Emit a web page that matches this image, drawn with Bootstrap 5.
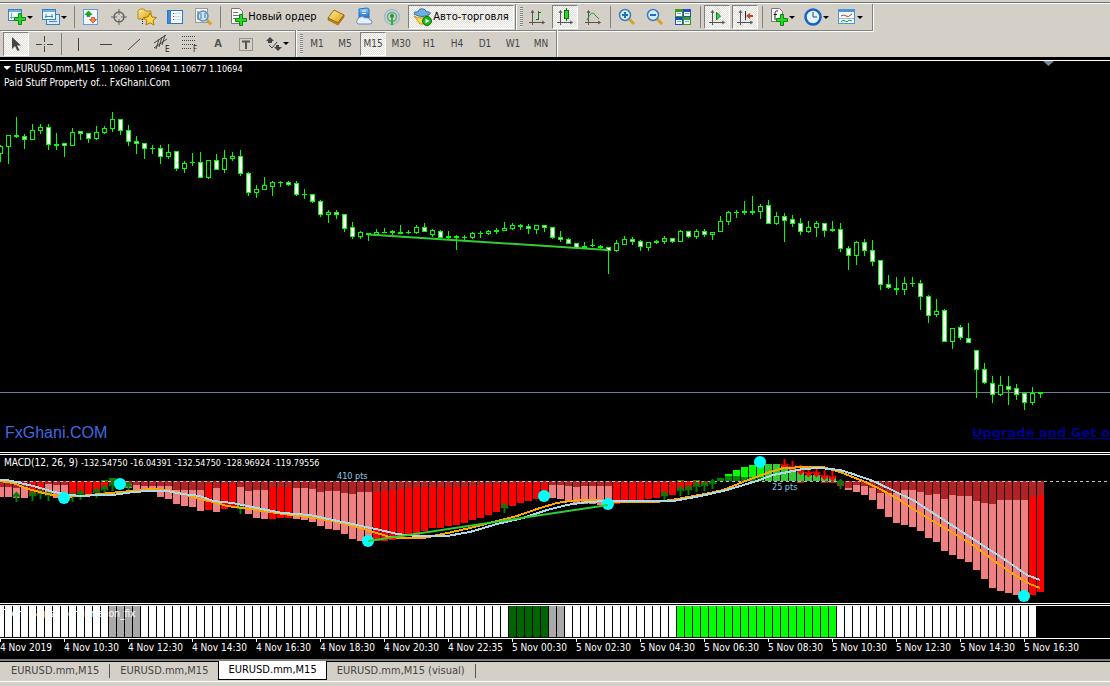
<!DOCTYPE html>
<html lang="ru">
<head>
<meta charset="utf-8">
<meta name="viewport" content="width=device-width, initial-scale=1">
<title>EURUSD.mm,M15</title>
<link href="https://cdn.jsdelivr.net/npm/bootstrap@5.3.0/dist/css/bootstrap.min.css" rel="stylesheet">
<style>
:root{--face:#d4d0c8;--shade:#808080;--ui:"DejaVu Sans Condensed","DejaVu Sans",sans-serif}
body{font-family:var(--ui);font-size:11px;line-height:14px;background:var(--face);color:#000;overflow-x:hidden}
button{font:inherit;color:inherit;background:none;border:0;padding:0}
.toolrow{height:27px;background:var(--face)}
.tools-top{border-top:1px solid #fff}
.bar{height:27px;padding:0 1px 0 3px;border-right:1px solid var(--shade);border-bottom:1px solid var(--shade);box-shadow:1px 1px 0 #fff}
.tools-low .bar{border-bottom:0;box-shadow:1px 0 0 #fff}
.tool{width:28px;height:24px;flex:none}
.tool svg,.wide svg{flex:none}
.tool.drop{width:34px}
.tool,.wide{display:flex;align-items:center;justify-content:center;white-space:nowrap}
.drop::after{content:"";border:3px solid transparent;border-top-color:#000;border-bottom:0}
.on{border:1px solid;border-color:var(--shade) #fff #fff var(--shade);background:repeating-conic-gradient(#fff 0 25%,#e0ddd6 0 50%) 0 0/2px 2px}
.tool.on{width:26px;margin:0 1px}
.order{width:99px}
.auto{width:106px;height:24px;margin-left:2px}
.sep{width:6px;height:22px;flex:none;background:linear-gradient(90deg,transparent 3px,#808080 3px 4px,transparent 4px)}
.grip{width:3px;height:20px;margin-left:1px;flex:none;background:repeating-linear-gradient(#808080 0 1px,#e8e6e0 1px 2px)}
.tf{font-size:10px;color:#444}
.pane{position:relative;overflow:hidden;background:#000;color:#fff;border-top:1px solid #fff}
.pane>svg{position:absolute;inset:0;width:100%;height:100%}
.pane-text{position:relative;font-size:10px;line-height:13px;white-space:pre;padding:1px 4px 0}
.quote{font-size:9px}
.price{flex:1 0 300px;border-bottom:1px solid #fff}
.macd{height:150px;margin-top:1px;border-bottom:1px solid #fff}
.strip{height:34px;margin-top:1px;border-bottom:1px solid #fff}
.brand{font-family:"Liberation Sans",Arial,sans-serif;font-size:16px;line-height:20px;color:#4169e1}
.promo{font:bold 13px/20px "DejaVu Sans",sans-serif;color:#00008b;text-decoration:underline;white-space:nowrap;flex:none}
.footline{padding:0 0 9px 5px}
.axis{height:22px;background:#000;color:#fff;font-size:10px;line-height:16px;overflow:hidden;border-bottom:2px solid var(--shade)}
.stamp{width:64px;flex:none;white-space:nowrap;background:linear-gradient(#fff,#fff) 0 0/1px 3px no-repeat;padding-top:1px}
.tabs{border-top:1px solid #000;border-bottom:1px solid #fff;height:21px;padding-left:1px}
.tabs a{display:block;height:19px;line-height:17px;padding:0 10px;color:#444;text-decoration:none;font-size:11px}
.tabs .vis{border-right:1px solid #555;height:14px;margin-top:2px;line-height:14px}
.tabs .current{background:#fff;color:#000;border:1px solid #000;border-top:0;padding:0 9px;margin-top:-1px}
svg text{font-family:var(--ui)}
</style>
<script src="https://cdn.jsdelivr.net/npm/bootstrap@5.3.0/dist/js/bootstrap.bundle.min.js"></script>
</head>
<body class="d-flex flex-column min-vh-100">
<svg width="0" height="0" class="position-absolute" aria-hidden="true">
  <defs>
    <symbol id="axes" viewBox="0 0 18 18"><path d="M4.5 3v14M1 14.5h15M3 5l1.500-2.500L6 5M14 13l2.500 1.500L14 16" fill="none" stroke="#555"/></symbol>
    <symbol id="plus" viewBox="0 0 12 12"><path d="M4.500 .5h3v4h4v3h-4v4h-3v-4h-4v-3h4z" fill="#2ed52e" stroke="#078a07"/></symbol>
    <linearGradient id="blue" x2="0" y2="1"><stop stop-color="#8fd0ff"/><stop offset="1" stop-color="#1668c8"/></linearGradient>
    <linearGradient id="gold" x2="1" y2="1"><stop stop-color="#fff3a0"/><stop offset="1" stop-color="#d99a10"/></linearGradient>
  </defs>
</svg>
<header>
  <div style="height:3px" class="border-bottom border-secondary"></div>
  <div class="toolrow tools-top d-flex">
    <div class="bar d-flex align-items-center">
      <button class="tool drop" aria-label="Новый график"><svg width="20" height="20"><rect x="1.500" y="2.500" width="13" height="11" fill="#eef7ff" stroke="#3a7fc0"/><path d="M2 4h12" stroke="#6fb0e8" stroke-width="2"/><path d="M4.500 6v6M3 10.500h9" stroke="#7aa2c4"/><use href="#plus" x="7" y="6" width="12" height="12"/></svg></button>
      <button class="tool drop" aria-label="Профили"><svg width="20" height="20"><rect x="5.500" y="7.500" width="13" height="10" fill="#d8ecfc" stroke="#3a7fc0"/><rect x="1.500" y="2.500" width="13" height="10" fill="#eef7ff" stroke="#3a7fc0"/><path d="M2 4h12" stroke="#6fb0e8" stroke-width="2"/><path d="M4 9.500h8M5 7v4M11 7v4M8 14.500h8" stroke="#4b86b8"/></svg></button>
      <span class="sep"></span>
      <button class="tool" aria-label="Обзор рынка"><svg width="18" height="18"><rect x="1.500" y="1.500" width="14" height="15" fill="#f2f8ff" stroke="#5aa0dc"/><path d="M6.500 3L10 6.500H8v2H5v-2H3z" fill="#12b312" stroke="#0a800a" stroke-width=".6"/><path d="M11 15l-3.500-3.500h2v-2h3v2h2z" fill="#ff8a50" stroke="#d04010" stroke-width=".8"/></svg></button>
      <button class="tool" aria-label="Окно данных"><svg width="18" height="18" fill="none" stroke="#666"><circle cx="9" cy="9" r="5" stroke-width="1.500"/><path d="M9 1v6M9 11v6M1 9h6M11 9h6"/></svg></button>
      <button class="tool" aria-label="Навигатор"><svg width="20" height="20"><path d="M1 4l2-2h4l1 2h6v8H1z" fill="url(#gold)" stroke="#b88a18"/><path d="M5.500 12v5" stroke="#222" stroke-dasharray="1 1"/><path d="M13 6l2 4 4.500.5-3.500 3 1 4.500-4-2.200L9 18l1-4.500-3.500-3L11 10z" fill="#ffd84a" stroke="#a87808"/></svg></button>
      <button class="tool" aria-label="Терминал"><svg width="18" height="18"><rect x="1.500" y="2.500" width="15" height="13" fill="#f4f9ff" stroke="#2c78c8"/><rect x="2" y="3" width="3" height="12" fill="#3e86d8"/><path d="M8 5.500h7M8 8.500h7M8 11.500h7" stroke="#cde"/><path d="M7 5.500h1M7 8.500h1M7 11.500h1" stroke="#d22"/></svg></button>
      <button class="tool" aria-label="Тестер стратегий"><svg width="20" height="20"><rect x="2.500" y="1.500" width="12" height="14" fill="#f4f4f4" stroke="#999"/><path d="M5 4v9M12 4v3" stroke="#467"/><circle cx="10" cy="9" r="5" fill="#c4e0f8" fill-opacity=".85" stroke="#5a8fc0" stroke-width="1.500"/><path d="M8 6v6M12 6v5" stroke="#579"/><path d="M14 13l4 4.500" stroke="#d9a020" stroke-width="3"/></svg></button>
      <span class="sep"></span>
      <button class="wide order"><svg width="20" height="20"><path d="M3.500 1.500h8l3 3v12h-11z" fill="#fafafa" stroke="#777"/><path d="M5 5.500h5M5 8.500h7M5 11.500h4" stroke="#777"/><use href="#plus" x="7" y="7" width="12" height="12"/></svg>Новый ордер</button>
      <button class="tool" aria-label="MetaEditor"><svg width="20" height="20"><path d="M2 11l6-8 10 5-6 8z" fill="url(#gold)" stroke="#9a6808"/><path d="M2 11v2l10 5 6-8V8l-6 8z" fill="#c88a14" stroke="#8a5a04" stroke-width=".6"/></svg></button>
      <button class="tool" aria-label="Маркет"><svg width="20" height="20"><path d="M5 2l8-1 2 1v9H5z" fill="url(#blue)" stroke="#1f70c4"/><path d="M8 4h4M8 6.500h4" stroke="#fff"/><path d="M4 17a3 3 0 0 1 0-5 4 3.500 0 0 1 7-1 3.500 3 0 0 1 5 2 2 2 0 0 1 0 4z" fill="#e6eef8" stroke="#6a8cb4"/></svg></button>
      <button class="tool" aria-label="Сигналы"><svg width="18" height="18" fill="none"><circle cx="9" cy="9" r="7.500" stroke="#9cbccc" stroke-width="1.500"/><circle cx="9" cy="9" r="4.500" stroke="#62a884" stroke-width="1.500"/><circle cx="9" cy="8" r="2" fill="#169a30"/><path d="M9 9v8" stroke="#2bb040" stroke-width="2"/></svg></button>
      <button class="wide on auto"><svg width="20" height="20"><path d="M1 9q7 5 15-2l-3 8q-3 3-6 2z" fill="#ffdc50" stroke="#c89414"/><path d="M1 7q0-3 4-2 1-4 5-3 3 0 3 3 5-1 4 2-8 5-16 0z" fill="#6fb2e0" stroke="#2f74a8"/><circle cx="14" cy="14" r="4.500" fill="#18b418" stroke="#087808"/><path d="M12.500 11.500l4 2.500-4 2.500z" fill="#fff"/></svg>Авто-торговля</button>
    </div>
    <div class="bar d-flex align-items-center">
      <span class="grip"></span>
      <button class="tool" aria-label="Бары"><svg width="18" height="18"><use href="#axes" width="18" height="18"/><path d="M10.500 3v9M8 11.500h2.500M10.500 4.500H13" stroke="#157a15"/></svg></button>
      <button class="tool on" aria-label="Свечи"><svg width="18" height="18"><use href="#axes" width="18" height="18"/><path d="M10.500 0v13" stroke="#157a15"/><rect x="8.500" y="2.500" width="4" height="8" fill="#30d030" stroke="#067a06"/></svg></button>
      <button class="tool" aria-label="Линия"><svg width="18" height="18"><use href="#axes" width="18" height="18"/><path d="M3 12q5-11 8-5l4 4" fill="none" stroke="#2a9a2a"/></svg></button>
      <span class="sep"></span>
      <button class="tool" aria-label="Увеличить"><svg width="18" height="18"><path d="M11 11l5 5" stroke="#d9a020" stroke-width="3"/><circle cx="7" cy="7" r="5.500" fill="#d4ecff" stroke="#3a80c0" stroke-width="1.500"/><path d="M4 7h6M7 4v6" stroke="#2070b8" stroke-width="2"/></svg></button>
      <button class="tool" aria-label="Уменьшить"><svg width="18" height="18"><path d="M11 11l5 5" stroke="#d9a020" stroke-width="3"/><circle cx="7" cy="7" r="5.500" fill="#d4ecff" stroke="#3a80c0" stroke-width="1.500"/><path d="M4 7h6" stroke="#2070b8" stroke-width="2"/></svg></button>
      <button class="tool" aria-label="Плитка"><svg width="18" height="18"><path d="M1 1h8v8H1zM9 9h8v8H9z" fill="#3c9a1c"/><path d="M9 1h8v8H9zM1 9h8v8H1z" fill="#1c50c8"/><path d="M2 4h6v4H2zM10 4h6v4h-6zM2 12h6v4H2zM10 12h6v4h-6z" fill="#f4f8f4"/><path d="M3 5.500h4M11 5.500h4M3 13.500h4M11 13.500h4" stroke="#7ac"/></svg></button>
      <span class="sep"></span>
      <button class="tool on" aria-label="Автопрокрутка"><svg width="18" height="18"><use href="#axes" width="18" height="18"/><path d="M8.500 4.500l4 3.500-4 4z" fill="#40d050" stroke="#108020"/></svg></button>
      <button class="tool on" aria-label="Сдвиг графика"><svg width="18" height="18"><use href="#axes" width="18" height="18"/><path d="M9.500 3v9" stroke="#226"/><path d="M10 8l4-3v2h3v2h-3v2z" fill="#d04010"/></svg></button>
      <span class="sep"></span>
      <button class="tool drop" aria-label="Индикаторы"><svg width="20" height="20"><path d="M2.500 1.500h8l3 3v10h-11z" fill="#fafafa" stroke="#777"/><path d="M9 4q-3-1-3 3v6M4.500 7.500H8" fill="none" stroke="#222"/><use href="#plus" x="7" y="7" width="12" height="12"/></svg></button>
      <button class="tool drop" aria-label="Периоды"><svg width="20" height="20"><circle cx="10" cy="10" r="7.500" fill="#e8f4ff" stroke="#1464c4" stroke-width="2.500"/><path d="M10 5v5h4" fill="none" stroke="#345"/></svg></button>
      <button class="tool drop" aria-label="Шаблоны"><svg width="20" height="20"><rect x="1.500" y="2.500" width="16" height="14" fill="#f6faff" stroke="#4a94d8"/><path d="M2 4h15" stroke="#4a94d8" stroke-width="2"/><path d="M4 9q3-2 5 0t6-2" fill="none" stroke="#b04020"/><path d="M2 11.500h15" stroke="#9bd"/><path d="M4 15q2-3 4-1t4-1l3 1" fill="none" stroke="#2a9a2a"/></svg></button>
      <span class="pe-1"></span>
    </div>
  </div>
  <div class="toolrow tools-low d-flex">
    <div class="bar d-flex align-items-center">
      <button class="tool on ms-0" aria-label="Курсор"><svg width="18" height="18"><path d="M5 2v12l3-3 2.500 5 2-1L10 10.500h4z" fill="#444"/></svg></button>
      <button class="tool" aria-label="Перекрестие"><svg width="18" height="18"><path d="M9.500 1v6M9.500 11v6M1 9.500h6M12 9.500h6M9 9.500h1" stroke="#444"/></svg></button>
      <span class="sep"></span>
      <button class="tool" aria-label="Вертикальная линия"><svg width="18" height="18"><path d="M9.500 3v13" stroke="#444"/></svg></button>
      <button class="tool" aria-label="Горизонтальная линия"><svg width="18" height="18"><path d="M3 9.500h12" stroke="#444"/></svg></button>
      <button class="tool" aria-label="Трендовая линия"><svg width="18" height="18"><path d="M3 15L15 4" stroke="#444"/></svg></button>
      <button class="tool" aria-label="Канал"><svg width="20" height="20" stroke="#444"><path d="M2 9L14 1M2 14L15 5M4 15l3-10M7 13l3-10M10 11l3-10" fill="none"/><text x="13" y="18" font-size="8" stroke="none" fill="#222">E</text></svg></button>
      <button class="tool" aria-label="Фибоначчи"><svg width="20" height="20"><path d="M2 2.500h14M2 6.500h14M2 10.500h14M2 14.500h9" stroke="#444" stroke-dasharray="1 1"/><text x="13" y="18" font-size="8" fill="#222">F</text></svg></button>
      <button class="tool fw-bold" style="color:#555">A</button>
      <button class="tool" aria-label="Метка"><svg width="18" height="18"><rect x="2.500" y="3.500" width="13" height="12" fill="none" stroke="#555" stroke-dasharray="1 1"/><path d="M5 6.500h8M9 6v8" stroke="#555" stroke-width="2"/></svg></button>
      <button class="tool drop" aria-label="Стрелки"><svg width="18" height="18" fill="#444"><path d="M1 6l4-4 4 4H7v2H3V6zM9 12h2v-2h3v2h3l-4 4z"/><path d="M4 10l3 3 5-6" fill="none" stroke="#444"/></svg></button>
    </div>
    <div class="bar d-flex align-items-center" id="frames"><span class="grip"></span></div>
  </div>
  <div style="height:3px;background:#000"></div>
</header>
<main class="flex-grow-1 d-flex flex-column bg-black">
  <section class="pane price d-flex flex-column justify-content-between">
    <svg id="candles" aria-label="EURUSD M15"></svg>
    <div class="pane-text"><div class="d-flex align-items-center"><svg width="11" height="6"><path d="M-1 0h8L3 4z" fill="#fff"/></svg><span>EURUSD.mm,M15  <span class="quote">1.10690 1.10694 1.10677 1.10694</span></span></div><div>Paid Stuff Property of... FxGhani.Com</div></div>
    <div class="footline position-relative d-flex justify-content-between"><div class="brand">FxGhani.COM</div><a class="promo" href="#">Upgrade and Get o</a></div>
  </section>
  <section class="pane macd">
    <svg id="oscillator" aria-label="MACD"></svg>
    <div class="pane-text">MACD(12, 26, 9) <span class="quote">-132.54750 -16.04391 -132.54750 -128.96924 -119.79556</span></div>
  </section>
  <section class="pane strip">
    <svg id="confirm" aria-label="Signal"></svg>
    <div class="pane-text">Trend Signal Confirmation_fix</div>
  </section>
  <div class="axis d-flex" id="axis"></div>
</main>
<nav class="tabs d-flex"><a class="vis" href="#">EURUSD.mm,M15</a><a class="vis border-0" href="#">EURUSD.mm,M15</a><a class="current" href="#">EURUSD.mm,M15</a><a class="vis" href="#">EURUSD.mm,M15 (visual)</a></nav>
<footer style="height:4px"></footer>
<script>
const NS = "http://www.w3.org/2000/svg", STEP = 8;
function layer(id, top) {
  const g = document.createElementNS(NS, "g");
  g.setAttribute("transform", `translate(0,${-top})`);
  document.getElementById(id).append(g);
  return (name, attrs, text) => {
    const e = document.createElementNS(NS, name);
    for (const k in attrs) e.setAttribute(k, attrs[k]);
    if (text) e.textContent = text;
    g.append(e);
  };
}
// Toolbar time frames
for (const t of "M1 M5 M15 M30 H1 H4 D1 W1 MN".split(" ")) {
  const b = document.createElement("button");
  b.className = "tool tf" + (t === "M15" ? " on" : "");
  b.textContent = t;
  document.getElementById("frames").append(b);
}

// Candles: high, body top, body bottom, low; "w" marks a falling bar
const candles = `145 146 154 162,135 135 147 164,117 135 137 138,134 136 140 149w,124 130 140 140,124 127 131 134,124 127 145 150w,133 144 146 150,143 143 146 157w,128 132 146 146,131 131 134 140w,133 133 139 143w,126 132 139 140,126 128 133 134,112 119 129 132,119 119 131 135w,125 130 142 146w,136 141 144 154w,143 143 149 159w,145 148 149 154,145 148 157 164w,144 152 157 159,151 151 169 171w,161 163 169 173,153 162 163 166,152 162 178 178w,160 160 178 179,154 160 170 170w,150 158 170 173,152 156 159 161,150 156 174 176w,172 173 193 196w,185 189 193 198,177 185 190 190,181 182 187 196,181 182 183 187,181 182 185 186w,181 183 195 196w,189 194 195 199,194 194 202 203w,200 201 215 217w,210 212 215 223,210 212 215 219w,214 214 229 232w,222 227 237 239w,231 232 237 239,233 233 235 241,229 232 235 235,228 232 233 233,230 231 233 235,225 232 234 234,230 232 233 234,225 227 233 234,223 227 232 232w,229 230 235 237,230 231 238 238w,231 236 238 240,235 236 238 250,235 237 238 240,232 233 238 239,231 233 234 238,230 231 234 235,228 230 232 234,222 228 231 231,223 225 229 230,224 225 227 230,224 226 229 234w,225 225 230 234,225 225 228 232w,227 227 238 239w,231 237 240 242w,238 239 244 244w,243 243 248 248w,242 246 248 249,239 245 246 247,245 246 248 249,247 247 251 274w,240 243 251 252,236 239 245 245,237 239 242 245w,240 241 247 251w,242 242 248 251,240 241 243 244,236 238 242 244,238 238 242 243w,230 231 242 242,231 231 237 238w,229 231 237 239,229 231 235 237w,232 232 235 240,216 221 232 232,211 212 222 225,210 212 213 218,201 211 213 215,196 211 213 215,204 206 212 219,200 205 224 224w,212 216 224 225,213 216 221 242w,215 219 224 227w,218 223 232 235w,221 227 232 233,221 223 228 237,223 223 231 237w,221 229 231 232,223 229 249 252w,246 248 256 270w,241 242 256 265,239 242 251 256w,240 250 262 266w,260 260 285 290w,275 284 288 289w,277 288 290 295,277 283 290 295,277 283 284 287,280 283 297 310w,295 296 316 323w,299 311 315 317,309 310 342 342w,328 328 342 349,325 327 338 340w,323 338 343 343w,350 350 370 398w,363 369 383 384w,376 383 395 403w,376 385 395 396,376 386 390 405w,384 388 395 400w,392 393 403 410w,387 393 403 405,392 392 394 398`.split(",");
const p = layer("candles", 61);
p("rect", {x: 0, y: 392, width: "100%", height: 1, fill: "#708090"});
candles.forEach((row, i) => {
  const [hi, top, bot, lo] = row.replace("w", "").split(" ").map(Number), x = i * STEP;
  p("rect", {x, y: hi, width: 1, height: lo - hi, fill: "#0f0"});
  if (bot - top < 3) p("rect", {x: x - 2, y: top, width: 5, height: bot - top, fill: "#0f0"});
  else p("rect", {x: x - 1.5, y: top + .5, width: 4, height: bot - top - 1, fill: row.endsWith("w") ? "#fff" : "#000", stroke: "#0f0"});
});
p("path", {d: "M368 234.500L608 250", stroke: "#32cd32", "stroke-width": 2});
p("path", {d: "M1043 61h11l-5.500 5z", fill: "#778899"});

// MACD bars: outer bottom, inner bottom; "r" marks a rising bar
const bars = `497 487,497 487,498 488,498 487,494 483r,494 483r,494 484,498 485,498 485,496 482r,494 482r,495 482r,492 482r,488 482r,484 482r,482 482r,488 484,490 485,490 486,492 486,497 486,499 486,504 490,506 490,507 490,511 490,510 484r,512 488,509 484r,507 484r,509 487,514 491,518 490,519 490,519 487r,518 487r,518 487r,519 488,520 488,522 489,526 492,529 491,530 491,534 493,539 494,541 492,541 492,541 492r,541 491r,540 490r,539 489r,536 488r,535 487r,531 487r,528 487r,528 487r,526 487r,525 487r,523 487r,520 486r,518 485r,515 485r,512 484r,508 484r,506 483r,503 483r,501 483r,499 483r,499 483r,498 485,499 485,501 486,503 487,504 486,504 486,505 486,505 486,504 483r,500 483r,500 483r,500 483r,499 483r,498 483r,496 483r,495 483r,490 482r,490 482r,486 482r,485 482r,483 482r`.split(",");
const tail = `486 486,490 488,492 485,495 486,500 488,509 493,517 493,523 493,525 490,527 490,531 492,538 495,542 494,551 499,555 495,559 496,562 496,570 501,579 503,588 504,591 500,593 500,595 500,595 500,595 497r,592 495r`.split(",");
const m = layer("oscillator", 455);
const block = (i, y, h, fill) => m("rect", {x: i * STEP - 3, y, width: 7, height: h, fill});
const below = (row, i) => {
  const [out, inn] = row.replace("r", "").split(" ").map(Number);
  block(i, 481, out - 481, row.endsWith("r") ? "#f00" : "#f08080");
  block(i, 481, inn - 481, "#b22222");
};
bars.forEach(below);
tail.forEach((row, k) => below(row, k + 105));
[[13,480],[14,478],[85,480],[87,480],[90,478]].forEach(([i, y]) => block(i, y, 481 - y, "#080"));
[[91,474,476],[92,470,476],[93,467,477],[94,465,477],[95,464,477]].forEach(([i, a, b]) => { block(i, a, 481 - a, "#0f0"); block(i, b, 481 - b, "#080"); });
[464,464,466,468,472,475,475,477,477].forEach((y, k) => block(96 + k, y, 481 - y, "#32cd32"));
[100,103,104].forEach(i => block(i, 481, 2, "#b22222"));
m("path", {d: "M0 481.500H4000", stroke: "#c0c0c0", "stroke-dasharray": "3 3"});
[[2,492],[4,491],[5,489],[6,491],[9,492],[10,490],[12,488],[13,485],[14,481],[16,482],[30,504],[63,503],[83,491],[85,486],[86,485],[87,482],[88,481],[89,479],[105,479]]
  .forEach(([i, y]) => m("path", {d: `M${i * 8 + .5} ${y + 10}V${y + 1}M${i * 8 - 3} ${y + 5}l3.500-4 3.500 4`, fill: "none", stroke: "#008000", "stroke-width": 2}));
[[98,459],[99,461],[100,465],[101,467],[102,467],[103,470],[104,471]]
  .forEach(([i, y]) => m("path", {d: `M${i * 8 + .5} ${y}v9M${i * 8 - 3} ${y + 5}l3.500 4 3.500-4`, fill: "none", stroke: "#f00", "stroke-width": 2}));
const line = (points, stroke) => m("polyline", {points, stroke, fill: "none", "stroke-width": 2, "shape-rendering": "crispEdges"});
line("0,481 13,483 28,489 36,491 47,494 64,497 80,496 100,494 120,492 133,491 150,489 168,490 183,494 200,499 213,502 227,506 243,508 263,511 283,514 307,517 333,521 353,526 380,534 390,537 403,538 423,538 443,534 470,528 497,521 517,516 537,509 557,503 577,500 597,500 617,502 657,502 677,499 710,493 723,490 743,482 767,473 783,468 807,467 823,467 840,472 863,481 880,489 900,500 913,509 933,521 953,533 973,545 993,560 1013,574 1030,584 1040,588", "#ffa500");
line("0,480 7,480 20,483 37,487 50,491 64,494 80,496 100,495 113,495 133,492 150,491 167,491 183,494 200,496 213,501 233,503 247,506 267,510 283,513 310,515 333,520 357,525 380,530 397,534 417,536 447,536 470,532 497,524 523,518 547,510 567,505 587,502 607,501 673,501 690,498 710,494 727,490 757,481 773,475 793,471 803,469 820,468 840,470 853,474 873,481 890,489 900,494 913,500 933,513 953,526 973,539 993,552 1007,561 1027,575 1040,580", "#add8e6");
[[64,498],[120,484],[368,541],[544,496],[608,504],[760,462],[1024,596]].forEach(([cx, cy]) => m("circle", {cx, cy, r: 6, fill: "#0ff"}));
m("path", {d: "M368 541L608 505", stroke: "#32cd32", "stroke-width": 2});
m("text", {x: 337, y: 479, "font-size": 9, fill: "#87ceeb"}, "410 pts");
m("text", {x: 772, y: 490, "font-size": 9, fill: "#87ceeb"}, "25 pts");

// Confirmation strip
const s = layer("confirm", 606);
for (let i = 0; i < 130; i++) {
  const fill = (i > 13 && i < 18) || i === 69 || i === 70 ? "#a9a9a9" : i > 63 && i < 69 ? "#006400" : i > 84 && i < 105 ? "#0f0" : "#fff";
  s("rect", {x: i * STEP - 3, y: 605, width: 7, height: 32, fill});
}

// Time axis
"4 Nov 2019,4 Nov 10:30,4 Nov 12:30,4 Nov 14:30,4 Nov 16:30,4 Nov 18:30,4 Nov 20:30,4 Nov 22:35,5 Nov 00:30,5 Nov 02:30,5 Nov 04:30,5 Nov 06:30,5 Nov 08:30,5 Nov 10:30,5 Nov 12:30,5 Nov 14:30,5 Nov 16:30".split(",").forEach(t => {
  const d = document.createElement("div");
  d.className = "stamp";
  d.textContent = t;
  document.getElementById("axis").append(d);
});
</script>
</body>
</html>
